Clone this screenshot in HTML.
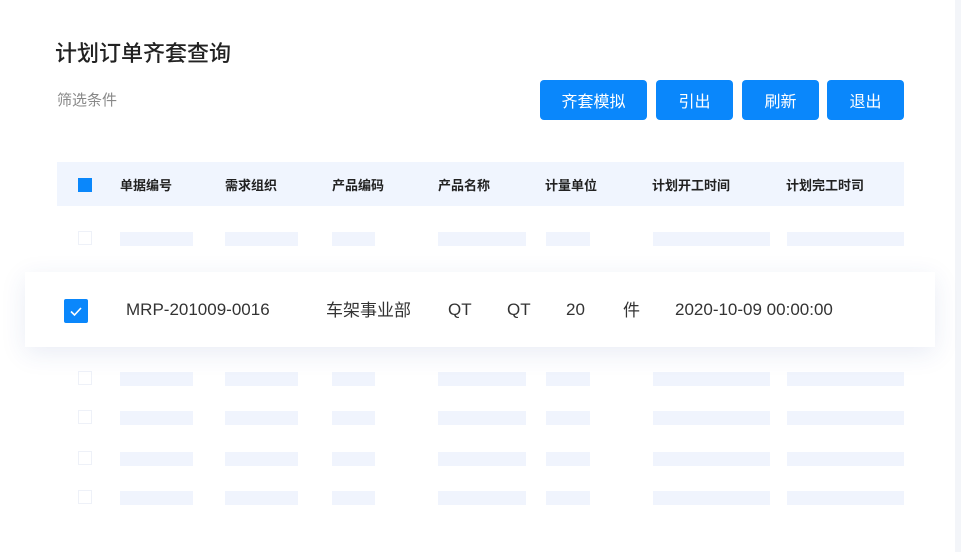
<!DOCTYPE html><html><head><meta charset="utf-8"><style>
body{margin:0;width:961px;height:552px;background:#fff;position:relative;overflow:hidden;font-family:"Liberation Sans","Noto Sans CJK SC",sans-serif}
.a{position:absolute}
.btn{position:absolute;top:80px;height:40px;background:#0a87fb;border-radius:4px;color:#fff;font-size:16px;line-height:40px;text-align:center;font-family:"Noto Sans CJK SC",sans-serif}
.th{position:absolute;top:176px;font-size:13px;line-height:18px;color:#222;font-weight:bold;font-family:"Noto Sans CJK SC",sans-serif}
.bar{position:absolute;height:14px;background:#f0f4fd}
.cb{position:absolute;left:78px;width:12px;height:12px;border:1px solid #eef1f8;background:#fff}
.td{position:absolute;top:299px;font-size:17px;line-height:22px;color:#333}
.cj{font-family:"Noto Sans CJK SC",sans-serif}
</style></head><body>
<div class="a" style="left:955px;top:0;width:6px;height:552px;background:#f3f5f9"></div>
<div class="a cj" style="left:55px;top:36px;font-size:22px;line-height:32px;color:#222;font-weight:500">计划订单齐套查询</div>
<div class="a cj" style="left:57px;top:89px;font-size:15px;line-height:22px;color:#888">筛选条件</div>
<div class="btn" style="left:540px;width:107px">齐套模拟</div>
<div class="btn" style="left:656px;width:77px">引出</div>
<div class="btn" style="left:742px;width:77px">刷新</div>
<div class="btn" style="left:827px;width:77px">退出</div>
<div class="a" style="left:57px;top:162px;width:847px;height:44px;background:#f0f5fe"></div>
<div class="a" style="left:78px;top:178px;width:14px;height:14px;background:#0a87fb"></div>
<div class="th" style="left:120px">单据编号</div>
<div class="th" style="left:225px">需求组织</div>
<div class="th" style="left:332px">产品编码</div>
<div class="th" style="left:438px">产品名称</div>
<div class="th" style="left:545px">计量单位</div>
<div class="th" style="left:652px">计划开工时间</div>
<div class="th" style="left:786px">计划完工时司</div>
<div id="rows"></div>
<div class="a" style="left:25px;top:272px;width:910px;height:75px;background:#fff;box-shadow:0 6px 24px rgba(40,70,160,0.1)"></div>
<div class="a" style="left:64px;top:299px;width:24px;height:24px;background:#0a87fb;border-radius:2px"><svg width="24" height="24"><path d="M7 12.5l3.5 3.5L17 9" stroke="#fff" stroke-width="1.6" fill="none"/></svg></div>
<div class="td" style="left:126px">MRP-201009-0016</div>
<div class="td cj" style="left:326px;top:298px">车架事业部</div>
<div class="td" style="left:448px">QT</div>
<div class="td" style="left:507px">QT</div>
<div class="td" style="left:566px">20</div>
<div class="td cj" style="left:623px;top:298px">件</div>
<div class="td" style="left:675px">2020-10-09 00:00:00</div>
<script>
var ys=[232,372,411,452,491],xs=[[120,73],[225,73],[332,43],[438,88],[546,44],[653,117],[787,117]],h='';
ys.forEach(function(y){h+='<div class="cb" style="top:'+(y-1)+'px"></div>';xs.forEach(function(c){h+='<div class="bar" style="left:'+c[0]+'px;top:'+y+'px;width:'+c[1]+'px"></div>'})});
document.getElementById('rows').innerHTML=h;
</script>
</body></html>
